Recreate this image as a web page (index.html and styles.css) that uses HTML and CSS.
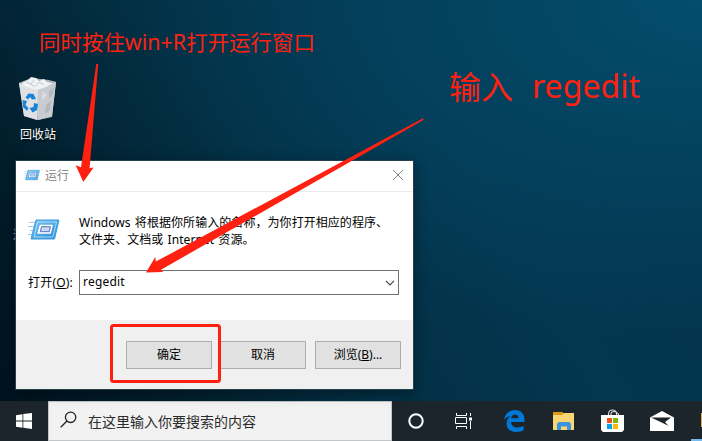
FILE: index.html
```html
<!DOCTYPE html>
<html lang="zh-CN">
<head>
<meta charset="utf-8">
<title>运行</title>
<link rel="stylesheet" href="styles.css">
</head>
<body>
<svg class="defs" width="0" height="0" aria-hidden="true">
  <defs>
    <linearGradient id="runBlue" x1="0" y1="0" x2="1" y2="1">
      <stop offset="0" stop-color="#7cc8f2"/><stop offset="1" stop-color="#2088d6"/>
    </linearGradient>
    <symbol id="run" viewBox="0 0 32 24">
      <path d="M1 4h8M0 8h8M2 12h5M0 16h5" stroke="#9fccec" stroke-width="1"/>
      <path d="M8 1.500h23l-4.500 19H3z" fill="url(#runBlue)" stroke="#3f9cdd" stroke-width="1"/>
      <path d="M9.700 3.500h18.800l-3.600 15H6z" fill="none" stroke="#c4e8fb" stroke-width=".8"/>
      <path d="M11.800 6.300h13.200l-2.200 9H9.200z" fill="#fff"/>
      <path d="M13.600 8.200h8.800l-1.100 5h-9z" fill="#c9d8f4" stroke="#5470be" stroke-width="1"/>
    </symbol>
  </defs>
</svg>
<main class="desktop">
  <div class="shortcut">
    <svg width="40" height="45" viewBox="0 0 40 45">
      <path d="M1 6 14 1l24 4-4 35-14 3-14-4z" fill="#bcc1c7"/>
      <path d="M1 6l19 5-1 32-13-4z" fill="#dfe1e5"/>
      <path d="M20 11l18-6-4 34-14 4z" fill="#c8cbd0"/>
      <path d="M1 6l19 5 18-6-7-2-17-2z" fill="#a9afb6"/>
      <path d="M4 6l6-3 3-3 5 1 3 3 5-2 3 3 6 1-7 4-9 3-13-4z" fill="#f1f2f3"/>
      <path d="M8 5l5 2 3-4m2 6 3-4 5 3m-15-2 6 4" stroke="#c4c9ce" fill="none"/>
      <path d="M31 14l5-4-1 7-4 5zM28 28l5-4-1 9-5 4z" fill="#b4b9bf"/>
      <path d="M24 14l5 4-5 6z" fill="#d9dbdf"/>
      <path d="M7.500 20.500l3-4 5 .5 2.500 5-4 .5-2-2.500-2 2.500zM4.500 23l4.500 1-1.500 4 3 3-1.500 3-4-4zM11.500 31l4-1 .5-4 4 1-1 6-4.500 2.500z" fill="#1683d8"/>
    </svg>
    <span class="shortcut-name">回收站</span>
  </div>
  <span class="hidden-label">运</span>

  <section class="dialog">
    <header class="titlebar">
      <svg width="16" height="13"><use href="#run"/></svg>
      <span class="title">运行</span>
      <svg class="close" width="12" height="12" viewBox="0 0 12 12"><path d="M1 1l10 10M11 1L1 11" stroke="#858585" stroke-width="1"/></svg>
    </header>
    <div class="content">
      <div class="message">
        <svg width="32" height="25"><use href="#run"/></svg>
        <p>Windows 将根据你所输入的名称，为你打开相应的程序、<br>文件夹、文档或 Internet 资源。</p>
      </div>
      <div class="field">
        <label>打开(<u>O</u>):</label>
        <div class="combo"><span>regedit</span>
          <svg width="10" height="6" viewBox="0 0 10 6"><path d="M1 .8l4 4 4-4" fill="none" stroke="#444" stroke-width="1.200"/></svg>
        </div>
      </div>
    </div>
    <footer class="actions">
      <div class="button">确定</div>
      <div class="button">取消</div>
      <div class="button">浏览(<u>B</u>)...</div>
    </footer>
  </section>

  <nav class="taskbar">
    <div class="start"><svg width="16" height="16" viewBox="0 0 16 16" fill="#fff"><path d="M0 2.200l6.500-.9v6.200H0zM7.300 1.100L16 0v7.500H7.300zM0 8.500h6.500v6.200L0 13.800zM7.300 8.500H16V16l-8.700-1.200z"/></svg></div>
    <div class="search">
      <svg width="17" height="17" viewBox="0 0 17 17" fill="none" stroke="#222" stroke-width="1.300"><circle cx="10.600" cy="6.300" r="5.200"/><path d="M7 10L.7 16.300"/></svg>
      <span>在这里输入你要搜索的内容</span>
    </div>
    <div class="apps">
      <div class="app"><svg width="16" height="16"><circle cx="8" cy="8" r="6.700" fill="none" stroke="#fff" stroke-width="2"/></svg></div>
      <div class="app task-view"><svg width="17" height="16" viewBox="0 0 17 16" fill="none" stroke="#fff" stroke-width="1"><path d="M1.500 0v2.500h10V0M1.500 16v-2.500h10V16M.5 4.500h11v6H.5zM15.500 0v3M15.500 8v8"/><path d="M14 4.500h3v3h-3z" fill="#fff" stroke="none"/></svg></div>
      <div class="app"><svg width="21" height="22" viewBox="0 0 21 22"><path d="M0 10C1 4 5 0 11 0c6 0 9.500 4 9.500 9.500V12H7c.3 4 3 5.500 6.500 5.500 2.300 0 4.500-.7 6-1.700v4.500c-2 1.100-4.500 1.700-7.300 1.700C6 22 2.500 18.500 2.500 13.500c0-3 1.600-5.800 4-7.200C4 6.500 1.500 8 0 10zm7.200-1.800h7.300c0-2.400-1.100-3.800-3.500-3.800-2.200 0-3.500 1.600-3.800 3.800z" fill="#0078d7"/></svg></div>
      <div class="app"><svg width="22" height="18" viewBox="0 0 22 18"><path d="M0 0h10v4H0z" fill="#d99a16"/><path d="M0 3h9l1.500-2H21v17H0z" fill="#f9d672"/><path d="M4 18v-6l1.500-2h11l1.500 2v6h-4v-3.500H8V18z" fill="#3a94df"/></svg></div>
      <div class="app"><svg width="23" height="24" viewBox="0 0 23 24"><path d="M7.500 7V4.500Q8 1 11.500 1t4 3.500V7M10 7V4.500Q10.500 2.500 13 2.500T17.500 5v2" fill="none" stroke="#d4d8da" stroke-width="1.100"/><path d="M0 6h23v15l-2 2H2l-2-2z" fill="#fff"/><path d="M6 9h5v5H6z" fill="#f25022"/><path d="M12 9h5v5h-5z" fill="#7fba00"/><path d="M6 15h5v5H6z" fill="#00a4ef"/><path d="M12 15h5v5h-5z" fill="#ffb900"/></svg></div>
      <div class="app"><svg width="24" height="20" viewBox="0 0 24 20"><path d="M0 6.500L12 0l12 6.500V20H0z" fill="#fff"/><path d="M1 6.500l20-.1-6 4.600 3.500 3.800z" fill="#1b252b"/></svg></div>
      <div class="app-edge"><i></i></div>
    </div>
  </nav>

  <svg class="annotations" width="702" height="441" viewBox="0 0 702 441" fill="#fe2112">
    <path d="M96.300 64h1.900L89.600 168l4-.6L83.300 182 75.700 165.300l5.300 2z"/>
    <path d="M423 118.300l.8 1.500L161 269.700l2.200 2.200L146 272.500l9.300-15.500.5 4.600z"/>
    <rect x="111.500" y="325.500" width="108" height="56" rx="2" fill="none" stroke="#fe2112" stroke-width="3"/>
    <text class="note-small" x="39" y="50" textLength="276" lengthAdjust="spacingAndGlyphs">同时按住win+R打开运行窗口</text>
    <text class="note-large" x="449" y="99" textLength="64" lengthAdjust="spacingAndGlyphs">输入</text>
    <text class="note-large" x="532" y="98" textLength="108" lengthAdjust="spacingAndGlyphs">regedit</text>
  </svg>
</main>
</body>
</html>
```

FILE: styles.css
```css
* { box-sizing: border-box; }
body {
  margin: 0;
  font: 12px/17px "Noto Sans", "Noto Sans CJK SC", sans-serif;
  color: #000;
}
svg { display: block; flex: none; }
.defs { position: absolute; }
.desktop {
  position: relative;
  width: 702px;
  height: 441px;
  overflow: hidden;
  display: flex;
  flex-direction: column;
  justify-content: flex-end;
  background:
    radial-gradient(ellipse 560px 340px at 702px 0, #034e6c 0%, rgba(3, 76, 106, .7) 35%, rgba(3, 70, 98, 0) 100%),
    linear-gradient(58deg, #00101c 0%, #02202f 22%, #033045 42%, #043650 65%, #04324c 100%);
}
.shortcut {
  position: absolute;
  left: 8px;
  top: 77px;
  width: 60px;
  display: flex;
  flex-direction: column;
  align-items: center;
  gap: 4px;
}
.shortcut-name { color: #fff; text-shadow: 1px 1px 2px #000; }
.hidden-label { position: absolute; left: 13px; top: 226px; color: #a9c3d3; }

.dialog {
  position: absolute;
  left: 15px;
  top: 160px;
  width: 399px;
  height: 230px;
  border: 1px solid #23424c;
  background: #fff;
  display: flex;
  flex-direction: column;
  box-shadow: 0 3px 12px rgba(0, 0, 0, .4);
}
.titlebar {
  height: 31px;
  display: flex;
  align-items: center;
  padding: 0 9px 2px 8px;
  gap: 5px;
  border-bottom: 1px solid #ebebeb;
  color: #858585;
}
.close { margin-left: auto; }
.content { flex: 1; padding: 22px 14px 0 12px; }
.message { display: flex; align-items: flex-start; gap: 19px; }
.message svg { margin-top: 4px; }
.message p { margin: 0; white-space: nowrap; word-spacing: 1px; letter-spacing: .06px; }
.field { display: flex; align-items: center; margin-top: 22px; }
.field label { width: 51px; white-space: nowrap; letter-spacing: .2px; }
.combo {
  flex: 1;
  height: 25px;
  border: 1px solid #707070;
  display: flex;
  align-items: center;
  justify-content: space-between;
  padding: 0 3px 2px;
  letter-spacing: .2px;
}
.combo svg { margin-top: 2px; }
.actions {
  height: 69px;
  background: #f0f0f0;
  display: flex;
  justify-content: flex-end;
  align-items: center;
  gap: 9px;
  padding: 0 12px 0 0;
}
.button {
  width: 86px;
  height: 28px;
  border: 1px solid #adadad;
  background: #e1e1e1;
  display: flex;
  justify-content: center;
  align-items: center;
  padding-bottom: 1px;
}
.button:first-child { margin-right: -1px; }

.taskbar { height: 40px; background: #1b252b; display: flex; }
.start { width: 48px; display: grid; place-items: center; }
.search {
  width: 344px;
  background: #f2f2f2;
  border: 1px solid #c3c6c8;
  display: flex;
  align-items: center;
  gap: 11px;
  padding-left: 11px;
  font-size: 14px;
  color: #2b2b2b;
}
.search svg { margin-bottom: 3px; }
.apps { flex: 1; display: flex; }
.app { width: 49px; flex: none; display: grid; place-items: center; }
.app:first-child { width: 48px; }
.app.task-view { width: 50px; padding-right: 3px; }
.app-edge {
  flex: 1;
  margin-left: 5px;
  border-bottom: 2px solid #76b9ed;
  display: flex;
  justify-content: flex-end;
  align-items: center;
}
.app-edge i { width: 1px; height: 14px; background: #e0b04a; }

.annotations { position: absolute; left: 0; top: 0; }
.note-small { font-size: 21px; }
.note-large { font-size: 32px; }
```
